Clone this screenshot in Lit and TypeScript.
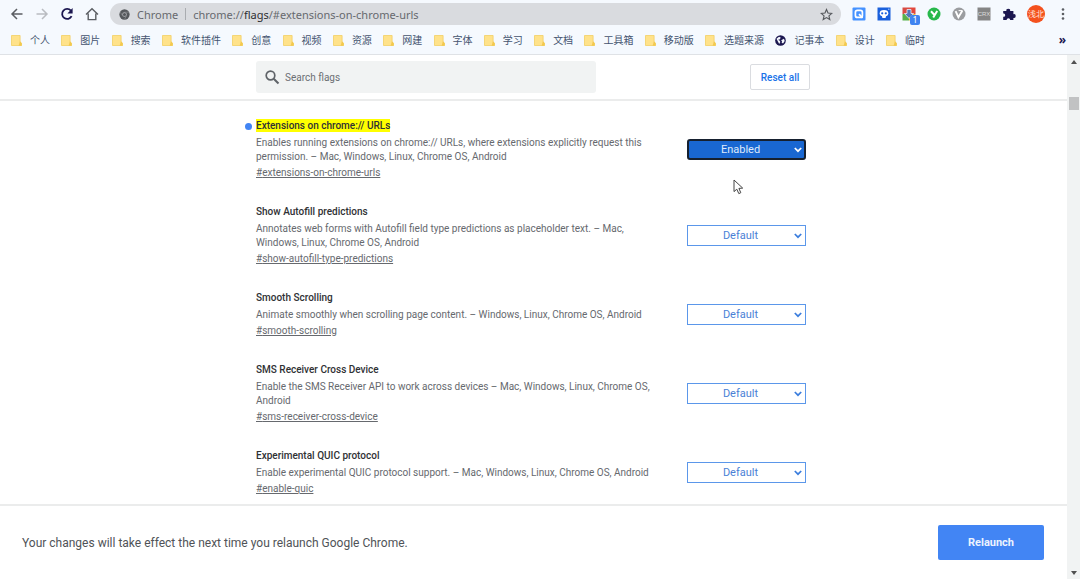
import { LitElement, html, css, svg, nothing } from "lit";
import { customElement } from "lit/decorators.js";
import { classMap } from "lit/directives/class-map.js";

interface Flag {
  id: string;
  title: string;
  text: string;
  enabled?: boolean;
}

const FLAGS: Flag[] = [
  {
    id: "extensions-on-chrome-urls",
    title: "Extensions on chrome:// URLs",
    text: "Enables running extensions on chrome:// URLs, where extensions explicitly request this permission. – Mac, Windows, Linux, Chrome OS, Android",
    enabled: true,
  },
  {
    id: "show-autofill-type-predictions",
    title: "Show Autofill predictions",
    text: "Annotates web forms with Autofill field type predictions as placeholder text. – Mac, Windows, Linux, Chrome OS, Android",
  },
  {
    id: "smooth-scrolling",
    title: "Smooth Scrolling",
    text: "Animate smoothly when scrolling page content. – Windows, Linux, Chrome OS, Android",
  },
  {
    id: "sms-receiver-cross-device",
    title: "SMS Receiver Cross Device",
    text: "Enable the SMS Receiver API to work across devices – Mac, Windows, Linux, Chrome OS, Android",
  },
  {
    id: "enable-quic",
    title: "Experimental QUIC protocol",
    text: "Enable experimental QUIC protocol support. – Mac, Windows, Linux, Chrome OS, Android",
  },
];

const BOOKMARKS = [
  "个人", "图片", "搜索", "软件插件", "创意", "视频", "资源", "网建", "字体",
  "学习", "文档", "工具箱", "移动版", "选题来源", "记事本", "设计", "临时",
];

const icon = (size: number, box: number, body: unknown) =>
  html`<svg width=${size} height=${size} viewBox="0 0 ${box} ${box}" aria-hidden="true">${body}</svg>`;

const back = icon(14, 14, svg`<path d="M12.5 7H2.500M7 2L2 7l5 5" fill="none" stroke="#5b5e63" stroke-width="1.500"/>`);
const forward = icon(14, 14, svg`<path d="M1.500 7h10M7 2l5 5-5 5" fill="none" stroke="#b9bcc1" stroke-width="1.500"/>`);
const reload = icon(14, 14, svg`
  <path d="M11.600 9.200A5 5 0 1 1 10.900 3.600" fill="none" stroke="#1c1750" stroke-width="1.800"/>
  <path d="M12.600 1v5.400H7.400z" fill="#1c1750"/>`);
const home = icon(14, 14, svg`<path d="M1 7.600L7 1.800l6 5.800M3.200 6.400v6.200h7.600V6.400" fill="none" stroke="#5b5e63" stroke-width="1.400"/>`);
const chromeMark = icon(11, 12, svg`
  <circle cx="6" cy="6" r="5.600" fill="#55585c"/>
  <circle cx="6" cy="6" r="2.500" fill="#b4b6ba"/>
  <circle cx="6" cy="6" r="1.700" fill="#55585c"/>
  <path d="M6 3.500h5M3.800 7.300L1.400 3.400M8.200 7.300L6 11.300" stroke="#8b8d91" stroke-width=".7"/>`);
const star = icon(13, 24, svg`<path d="M12 2.800l2.800 6.500 7 .6-5.300 4.600 1.600 6.900-6.100-3.700-6.100 3.700 1.600-6.900L2.200 9.900l7-.6z" fill="none" stroke="#56595d" stroke-width="2.100"/>`);
const folder = icon(11, 11, svg`
  <path d="M.5.5h8.600v7l1.400.7v2.300H.5z" fill="#ffe28a" stroke="#f3cf63" stroke-width=".8"/>
  <path d="M9 6.200l1.600 1.700v2.800H7.600z" fill="#f3c94f"/>`);
const globe = icon(11, 12, svg`
  <circle cx="6" cy="6" r="5.800" fill="#1c1750"/>
  <path d="M1.600 4.200L4.400 2l1.800.8-.8 1.800-2 .6 1.800 1 .6 1.400-1.200 2.200zM7.200 5.400l2.600-1.200.8 2.400-1.800 2.600-1.600-.8.6-1.400-1-.6z" fill="#f4f8fe"/>`);

const extensions = [
  {
    name: "Search",
    art: svg`<rect x=".5" y=".5" width="13" height="13" rx="1" fill="#4592ff"/>
      <rect x="3.400" y="3.400" width="7" height="7" rx="2" fill="none" stroke="#fff" stroke-width="1.700"/>
      <path d="M7 7.200l3.600 3.600" stroke="#fff" stroke-width="1.700"/>`,
  },
  {
    name: "Helper",
    art: svg`<rect x=".5" y=".5" width="13" height="13" fill="#1a60dc"/>
      <ellipse cx="7" cy="6.200" rx="4.300" ry="3.300" fill="#fff"/>
      <path d="M4.800 8h4.400L8.600 11H5.400z" fill="#fff"/>
      <circle cx="5.200" cy="6.300" r="1.100" fill="#1a60dc"/><circle cx="8.800" cy="6.300" r="1.100" fill="#1a60dc"/>
      <circle cx="11.800" cy="2.200" r=".8" fill="#9cc3ff"/>`,
  },
  {
    name: "Downloads",
    badge: "1",
    art: svg`<path d="M.5.5H7V7H.5z" fill="#d84a42"/><path d="M7 .5h6.500V7H7z" fill="#e2483d"/>
      <path d="M.5 7H7v6.500H.5z" fill="#57b04a"/><path d="M7 7h6.500v6.500H7z" fill="#f2bf3a"/>
      <path d="M5 2.500h4v4h2.600L7 11.400 2.400 6.500H5z" fill="#5277b8" stroke="#e8eef8" stroke-width=".8"/>`,
  },
  {
    name: "Y",
    art: svg`<circle cx="7" cy="7" r="6.500" fill="#27b84b"/>
      <path d="M4 4.300l3 3.200M10.200 4L6.200 10.600" stroke="#fff" stroke-width="2" fill="none"/>`,
  },
  {
    name: "V",
    art: svg`<circle cx="7" cy="7" r="6.500" fill="#9b9da0"/>
      <path d="M3.600 4.200L6.400 10.200l3.900-6.400" stroke="#fff" stroke-width="1.900" fill="none"/>
      <path d="M6.600 3.600h4" stroke="#fff" stroke-width="1"/>`,
  },
  {
    name: "CRX",
    art: svg`<rect x=".5" y=".5" width="13" height="13" fill="#858585"/>
      <text x="7" y="9.400" text-anchor="middle" font-family="Liberation Sans, sans-serif" font-size="6" fill="#dcdcdc">CRX</text>`,
  },
  {
    name: "Extensions",
    art: svg`<path d="M1.200 4h3.200a1.900 1.900 0 1 1 3.700 0h3.300v3.200a1.900 1.900 0 1 1 0 3.700V13H8.200a1.800 1.800 0 1 0-3.600 0H1.200V9.700a1.600 1.600 0 1 0 0-3.100z" fill="#1c1750"/>`,
  },
];

@customElement("browser-bar")
export class BrowserBar extends LitElement {
  static styles = css`
    :host {
      display: block;
      background: #f5f9fe;
      border-bottom: 1px solid #dfe2e6;
      font-family: "Noto Sans", "Noto Sans CJK SC", sans-serif;
    }
    svg { display: block; flex: none; }
    button {
      border: 0;
      padding: 0;
      background: none;
      position: relative;
      display: block;
      font-family: inherit;
    }
    .toolbar {
      display: flex;
      align-items: center;
      height: 28px;
      padding: 0 10px;
    }
    .nav { display: flex; gap: 11px; margin-right: 11px; }
    .omnibox {
      flex: 1;
      display: flex;
      align-items: center;
      height: 22px;
      padding: 0 8px 0 9px;
      border-radius: 11px;
      background: #d9dbdf;
      color: #66696e;
      font-size: 11px;
      min-width: 0;
    }
    .scheme { margin-left: 7px; }
    .divider { width: 1px; height: 12px; margin: 0 7px; background: #a9acb0; }
    .url { flex: 1; min-width: 0; white-space: nowrap; }
    .host { color: #2c2e31; }
    .tools { display: flex; align-items: center; gap: 11px; margin-left: 11px; }
    .badge {
      position: absolute;
      left: 8px;
      top: 8px;
      width: 10px;
      height: 10px;
      border-radius: 2px;
      background: #3f83f0;
      color: #fff;
      font-size: 9px;
      line-height: 10px;
      text-align: center;
    }
    .avatar {
      width: 18px;
      height: 18px;
      border-radius: 50%;
      background: #f4511e;
      color: #ffe6dc;
      font-size: 8px;
      line-height: 18px;
      white-space: nowrap;
      text-align: center;
    }
    .bookmarks {
      display: flex;
      align-items: center;
      justify-content: space-between;
      height: 24px;
      padding: 0 14px 2px 11px;
    }
    .list {
      flex: 1;
      max-width: 914px;
      display: flex;
      justify-content: space-between;
      list-style: none;
      margin: 0;
      padding: 0;
    }
    .bookmark {
      display: flex;
      align-items: center;
      gap: 8px;
      color: #44546f;
      font-size: 10px;
      line-height: 16px;
      text-decoration: none;
      white-space: nowrap;
    }
    .more { color: #1c1750; font-size: 12px; font-weight: 700; line-height: 16px; }
  `;

  render() {
    return html`
      <div class="toolbar">
        <div class="nav">
          <button aria-label="Back">${back}</button>
          <button aria-label="Forward">${forward}</button>
          <button aria-label="Reload">${reload}</button>
          <button aria-label="Home">${home}</button>
        </div>
        <div class="omnibox">
          ${chromeMark}
          <span class="scheme">Chrome</span>
          <span class="divider"></span>
          <span class="url">chrome://<span class="host">flags</span>/#extensions-on-chrome-urls</span>
          <button aria-label="Bookmark this page">${star}</button>
        </div>
        <div class="tools">
          ${extensions.map(
            (e) => html`<button aria-label=${e.name}>
              ${icon(14, 14, e.art)}${e.badge ? html`<span class="badge">${e.badge}</span>` : nothing}
            </button>`
          )}
          <button class="avatar">浅北</button>
          <button aria-label="Menu">
            ${icon(14, 14, svg`<g fill="#5b5e63"><circle cx="7" cy="2.500" r="1.300"/><circle cx="7" cy="7" r="1.300"/><circle cx="7" cy="11.500" r="1.300"/></g>`)}
          </button>
        </div>
      </div>
      <nav class="bookmarks">
        <ul class="list">
          ${BOOKMARKS.map(
            (name) => html`<li><a class="bookmark" href="#">${name === "记事本" ? globe : folder}${name}</a></li>`
          )}
        </ul>
        <button class="more" aria-label="More bookmarks">»</button>
      </nav>
    `;
  }
}

@customElement("flag-row")
export class FlagRow extends LitElement {
  static properties = { flag: { attribute: false } };
  declare flag: Flag;

  static styles = css`
    :host {
      display: flex;
      align-items: center;
      justify-content: space-between;
      padding-right: 4px;
      font-size: 10px;
      color: #66696e;
    }
    .body { width: 400px; }
    .title {
      position: relative;
      margin: 0 0 2px;
      font-size: 10px;
      font-weight: 500;
      line-height: 16px;
      color: #2f3134;
    }
    .found { background: #ff0; padding: 1px 0; }
    .dot {
      position: absolute;
      left: -11px;
      top: 5px;
      width: 7px;
      height: 7px;
      border-radius: 50%;
      background: #4285f4;
    }
    .text { margin: 0 0 1px; line-height: 14px; }
    .link { display: block; width: fit-content; line-height: 16px; color: inherit; }
    .pick { display: grid; align-items: center; width: 119px; color: #3b7ddd; }
    .select {
      grid-area: 1 / 1;
      appearance: none;
      width: 100%;
      height: 21px;
      margin: 0;
      padding: 0 12px 0 0;
      border: 1px solid #5b97ea;
      border-radius: 0;
      background: #fff;
      color: #4a7fd6;
      font: 11px Roboto, sans-serif;
      text-align: center;
      text-align-last: center;
    }
    .chevron {
      grid-area: 1 / 1;
      justify-self: end;
      margin-right: 4px;
      pointer-events: none;
      z-index: 1;
    }
    .on { color: #fff; }
    .on .select {
      border: 2px solid #16202f;
      border-radius: 3px;
      background: #1967d2;
      color: #dfeafc;
    }
  `;

  render() {
    const { id, title, text, enabled } = this.flag;
    return html`
      <div class="body">
        <h2 class="title">
          ${enabled ? html`<span class="dot"></span>` : nothing}<label for="choice" class=${classMap({ found: !!enabled })}>${title}</label>
        </h2>
        <p class="text">${text}</p>
        <a class="link" href="#${id}">#${id}</a>
      </div>
      <div class=${classMap({ pick: true, on: !!enabled })}>
        <select id="choice" class="select">
          <option ?selected=${!enabled}>Default</option>
          <option ?selected=${!!enabled}>Enabled</option>
          <option>Disabled</option>
        </select>
        <svg class="chevron" width="8" height="6" viewBox="0 0 8 6" aria-hidden="true">
          <path d="M.8 1L4 4.200 7.200 1" fill="none" stroke="currentColor" stroke-width="1.700"/>
        </svg>
      </div>
    `;
  }
}

@customElement("app-root")
export class AppRoot extends LitElement {
  static styles = css`
    :host {
      display: flex;
      flex-direction: column;
      height: 100vh;
      overflow: hidden;
      background: #fff;
      font-family: Roboto, sans-serif;
    }
    .view { flex: 1; display: flex; min-height: 0; }
    .page { flex: 1; display: flex; flex-direction: column; min-width: 0; }
    .column {
      width: 555px;
      max-width: 100%;
      margin: 0 auto;
      padding-right: 1px;
      box-sizing: border-box;
    }
    .header { border-bottom: 2px solid #ebecec; padding: 6px 0; }
    .search-row { display: flex; align-items: center; justify-content: space-between; }
    .search {
      display: flex;
      align-items: center;
      gap: 4px;
      width: 340px;
      height: 32px;
      padding-left: 8px;
      box-sizing: border-box;
      border-radius: 3px;
      background: #f1f3f3;
    }
    .input {
      flex: 1;
      min-width: 0;
      border: 0;
      padding: 0;
      background: none;
      font: 10px Roboto, sans-serif;
      color: #303236;
    }
    .input::placeholder { color: #6c6f73; opacity: 1; }
    .reset {
      width: 60px;
      height: 26px;
      padding: 0;
      border: 1px solid #dadce0;
      border-radius: 2px;
      background: #fff;
      color: #1a73e8;
      font: 500 10px Roboto, sans-serif;
    }
    .flags { flex: 1; min-height: 0; overflow: hidden; }
    .list { display: grid; gap: 23px; padding-top: 17px; }
    .footer {
      display: flex;
      align-items: center;
      justify-content: space-between;
      padding: 19px 23px 19px 22px;
      border-top: 2px solid #ebecec;
      background: #fff;
      color: #505357;
      font-size: 12px;
    }
    .relaunch {
      width: 106px;
      height: 35px;
      padding: 0;
      border: 0;
      border-radius: 2px;
      background: #4285f4;
      color: #edf3fe;
      font: 700 11px Roboto, sans-serif;
    }
    .scrollbar {
      width: 13px;
      display: flex;
      flex-direction: column;
      align-items: center;
      padding: 5px 0 4px;
      box-sizing: border-box;
      background: #f1f3f3;
    }
    .thumb { width: 10px; height: 13px; margin: 33px 0 auto; background: #c1c2c3; }
    .pointer { position: absolute; left: 733px; top: 179px; }
  `;

  render() {
    return html`
      <browser-bar></browser-bar>
      <div class="view">
        <div class="page">
          <header class="header">
            <div class="column search-row">
              <label class="search">
                <svg width="17" height="17" viewBox="0 0 17 17" aria-hidden="true">
                  <circle cx="6.500" cy="6.500" r="4.300" fill="none" stroke="#5f6368" stroke-width="1.700"/>
                  <path d="M9.700 9.700l4.800 4.800" stroke="#5f6368" stroke-width="2"/>
                </svg>
                <input class="input" type="search" aria-label="Search flags" placeholder="Search flags" />
              </label>
              <button class="reset">Reset all</button>
            </div>
          </header>
          <main class="flags">
            <div class="column list">${FLAGS.map((f) => html`<flag-row .flag=${f}></flag-row>`)}</div>
          </main>
          <footer class="footer">
            <span>Your changes will take effect the next time you relaunch Google Chrome.</span>
            <button class="relaunch">Relaunch</button>
          </footer>
        </div>
        <div class="scrollbar" aria-hidden="true">
          <svg width="6" height="4" viewBox="0 0 6 4"><path d="M0 4l3-4 3 4z" fill="#505050"/></svg>
          <div class="thumb"></div>
          <svg width="6" height="4" viewBox="0 0 6 4"><path d="M0 0l3 4 3-4z" fill="#505050"/></svg>
        </div>
      </div>
      <svg class="pointer" width="11" height="16" viewBox="0 0 11 16" aria-hidden="true">
        <path d="M1 1v11.600l2.800-2.400 2 4.400 2-.9-1.900-4.300 3.800-.3z" fill="#fff" stroke="#444" stroke-width="1"/>
      </svg>
    `;
  }
}
